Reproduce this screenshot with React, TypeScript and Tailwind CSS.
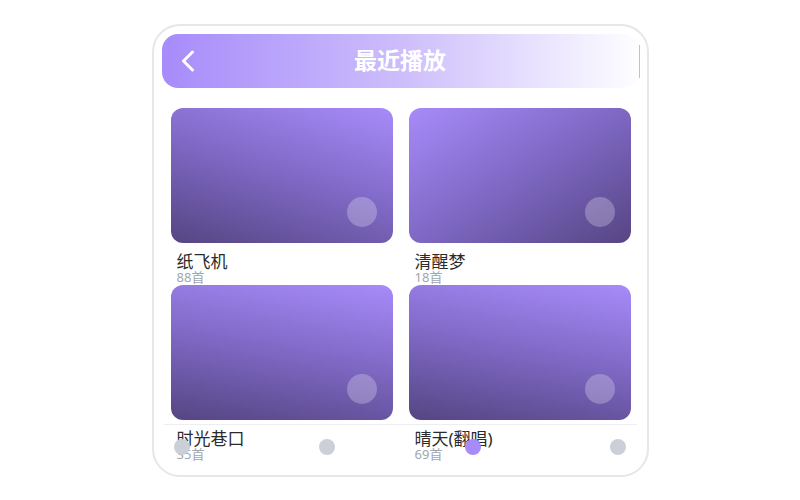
import { useState } from 'react';

interface Playlist {
  id: number;
  name: string;
  count: number;
  cover: string;
}

const playlists: Playlist[] = [
  { id: 1, name: '纸飞机', count: 88, cover: 'bg-[linear-gradient(198deg,#a78bfa_0%,#7e68c4_50%,#564583_100%)]' },
  { id: 2, name: '清醒梦', count: 18, cover: 'bg-[linear-gradient(148deg,#a78bfa_0%,#7e68c4_50%,#564583_100%)]' },
  { id: 3, name: '时光巷口', count: 35, cover: 'bg-[linear-gradient(190deg,#a78bfa_0%,#7e68c4_50%,#564583_100%)]' },
  { id: 4, name: '晴天(翻唱)', count: 69, cover: 'bg-[linear-gradient(190deg,#a78bfa_0%,#7e68c4_50%,#564583_100%)]' },
];

function BackIcon() {
  return (
    <svg width="14" height="22" viewBox="0 0 14 22" fill="none">
      <polyline
        points="11.5,2 2.5,11 11.5,20"
        stroke="white"
        strokeWidth="3"
        strokeLinecap="round"
        strokeLinejoin="round"
      />
    </svg>
  );
}

function App() {
  const [activeNav, setActiveNav] = useState(2);

  return (
    <div className="h-[500px] w-full flex items-center justify-center bg-white font-['Noto_Sans','Noto_Sans_CJK_SC',sans-serif]">
      <div className="relative w-[497px] h-[453px] border-2 border-[#e6e6ec] rounded-[28px] overflow-hidden bg-white px-2 pt-[8px]">
        {/* Header */}
        <header className="relative h-[54px] rounded-[16px] bg-gradient-to-r from-[#a78bfa] via-[#cdbdfb] to-[#fefeff] flex items-center px-[19px]">
          <button className="w-[20px] h-[24px] flex items-center justify-start">
            <BackIcon />
          </button>
          <h1 className="absolute left-0 right-0 text-center text-white text-[23px] font-bold leading-none pointer-events-none">
            最近播放
          </h1>
          <div className="absolute right-[-1px] top-[11px] h-[33px] w-px bg-[#c4b5fd]" />
        </header>

        {/* Playlist grid */}
        <main className="grid grid-cols-2 gap-x-4 pl-[9px] pr-[8px] mt-[20px]">
          {playlists.map(p => (
            <div key={p.id} className="h-[177px]">
              <div className={`relative h-[135px] rounded-[12px] ${p.cover}`}>
                <div className="absolute right-[16px] bottom-[16px] w-[30px] h-[30px] rounded-full bg-white/25" />
              </div>
              <div className="pl-[6px] mt-[10px]">
                <div className="text-[17px] leading-[18px] text-[#2b2b2b]">{p.name}</div>
                <div className="text-[13px] leading-[14px] text-[#a0a6b0] -mt-[1px]">{p.count}首</div>
              </div>
            </div>
          ))}
        </main>

        {/* Bottom nav */}
        <nav className="absolute left-[10px] right-[10px] bottom-0 h-[51px] border-t border-[#eeeef2] px-[10px] pt-[14px] flex justify-between items-start">
          {[0, 1, 2, 3].map(i => (
            <button
              key={i}
              onClick={() => setActiveNav(i)}
              className={`w-4 h-4 rounded-full ${activeNav === i ? 'bg-[#a78bfa]' : 'bg-[#cbd0d8]'}`}
            />
          ))}
        </nav>
      </div>
    </div>
  );
}

export default App;
